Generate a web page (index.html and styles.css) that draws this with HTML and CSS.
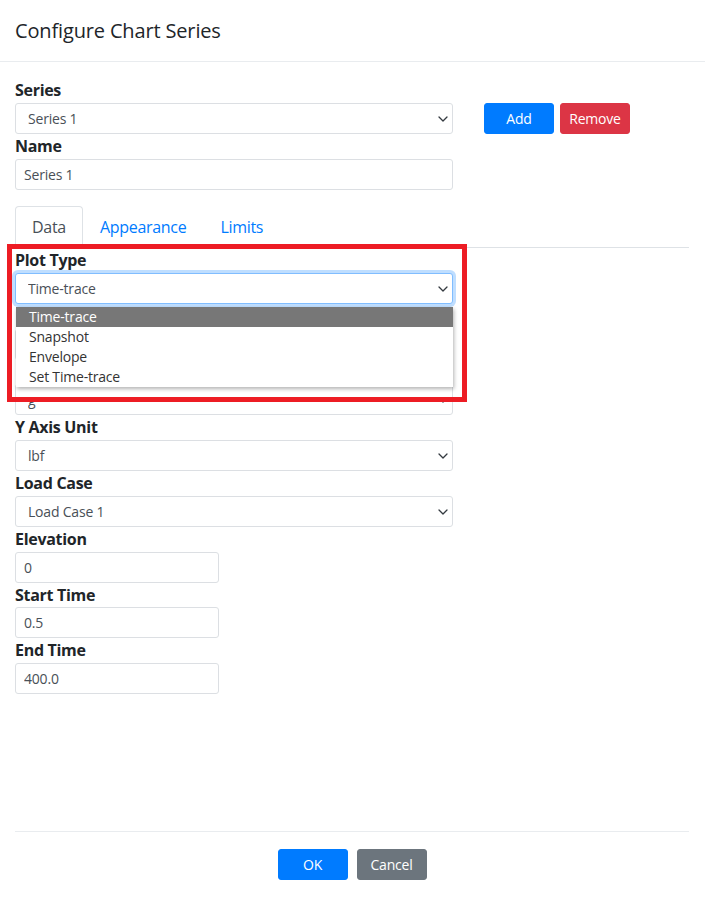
FILE: index.html
```html
<!DOCTYPE html>
<html lang="en">
<head>
<meta charset="utf-8">
<title>Configure Chart Series</title>
<link rel="stylesheet" href="styles.css">
</head>
<body>
<div class="modal">
  <div class="modal-header">
    <h5 class="modal-title">Configure Chart Series</h5>
  </div>
  <div class="modal-body">
    <div class="series-row">
      <div class="series-fields">
        <label class="field-label">Series</label>
        <div class="select-wrap">
          <select class="form-select"><option>Series 1</option></select>
          <svg class="chev" viewBox="0 0 10 6" width="10" height="6"><path d="M1 1l4 4 4-4" fill="none" stroke="#343a40" stroke-width="1.3" stroke-linecap="round" stroke-linejoin="round"/></svg>
        </div>
        <label class="field-label">Name</label>
        <input class="form-input wide" type="text" value="Series 1">
      </div>
      <div class="series-actions">
        <button class="btn btn-primary">Add</button>
        <button class="btn btn-danger">Remove</button>
      </div>
    </div>

    <ul class="nav-tabs">
      <li class="tab active">Data</li>
      <li class="tab">Appearance</li>
      <li class="tab">Limits</li>
    </ul>

    <div class="tab-pane">
      <label class="field-label">Plot Type</label>
      <div class="select-wrap">
        <select class="form-select focused"><option>Time-trace</option></select>
        <svg class="chev" viewBox="0 0 10 6" width="10" height="6"><path d="M1 1l4 4 4-4" fill="none" stroke="#343a40" stroke-width="1.3" stroke-linecap="round" stroke-linejoin="round"/></svg>
      </div>
      <div class="field-label"><span class="covered">Component</span></div>
      <div class="select-wrap">
        <select class="form-select"><option></option></select>
      </div>
      <div class="field-label"><span class="covered">Quantity</span></div>
      <div class="select-wrap">
        <select class="form-select"><option>g</option></select>
        <svg class="chev" viewBox="0 0 10 6" width="10" height="6"><path d="M1 1l4 4 4-4" fill="none" stroke="#343a40" stroke-width="1.3" stroke-linecap="round" stroke-linejoin="round"/></svg>
      </div>
      <label class="field-label">Y Axis Unit</label>
      <div class="select-wrap">
        <select class="form-select"><option>lbf</option></select>
        <svg class="chev" viewBox="0 0 10 6" width="10" height="6"><path d="M1 1l4 4 4-4" fill="none" stroke="#343a40" stroke-width="1.3" stroke-linecap="round" stroke-linejoin="round"/></svg>
      </div>
      <label class="field-label">Load Case</label>
      <div class="select-wrap">
        <select class="form-select"><option>Load Case 1</option></select>
        <svg class="chev" viewBox="0 0 10 6" width="10" height="6"><path d="M1 1l4 4 4-4" fill="none" stroke="#343a40" stroke-width="1.3" stroke-linecap="round" stroke-linejoin="round"/></svg>
      </div>
      <label class="field-label">Elevation</label>
      <input class="form-input short" type="text" value="0">
      <label class="field-label">Start Time</label>
      <input class="form-input short" type="text" value="0.5">
      <label class="field-label">End Time</label>
      <input class="form-input short" type="text" value="400.0">
    </div>
  </div>
  <div class="modal-footer">
    <button class="btn btn-primary">OK</button>
    <button class="btn btn-secondary">Cancel</button>
  </div>

  <ul class="dropdown-list">
    <li class="dd-item selected">Time-trace</li>
    <li class="dd-item">Snapshot</li>
    <li class="dd-item">Envelope</li>
    <li class="dd-item">Set Time-trace</li>
  </ul>
  <div class="annotation"></div>
</div>
</body>
</html>
```

FILE: styles.css
```css
* { box-sizing: border-box; }

html, body {
  margin: 0;
  padding: 0;
  background: #fff;
}

body {
  font-family: "Open Sans", "Noto Sans", sans-serif;
  color: #212529;
}

.modal {
  position: relative;
  display: flex;
  flex-direction: column;
  height: 900px;
  width: 705px;
}

.modal-header {
  padding: 16px 15px 15px;
  border-bottom: 1px solid #e9ecef;
}

.modal-title {
  margin: 0;
  font-size: 20px;
  line-height: 30px;
  font-weight: 500;
  letter-spacing: -0.15px;
  color: #212529;
}

.modal-body {
  flex: 1;
  padding: 16px 16px 0 15px;
}

.series-row {
  display: flex;
}

.series-fields {
  width: 438px;
  display: flex;
  flex-direction: column;
}

.series-actions {
  display: flex;
  gap: 6px;
  margin-left: 31px;
  padding-top: 24.75px;
  align-items: flex-start;
}

.field-label {
  display: block;
  height: 24.75px;
  font-size: 16px;
  line-height: 24.75px;
  font-weight: 700;
  letter-spacing: -0.3px;
  color: #212529;
}

.covered {
  visibility: hidden;
}

.select-wrap {
  position: relative;
  width: 438px;
}

.form-select {
  display: block;
  width: 100%;
  height: 31px;
  margin: 0;
  padding: 0 24px 0 12px;
  font-family: inherit;
  font-size: 14px;
  letter-spacing: -0.2px;
  color: #495057;
  background: #fff;
  border: 1px solid #dcdfe3;
  border-radius: 3px;
  appearance: none;
  -webkit-appearance: none;
  outline: none;
}

.form-select.focused {
  border-color: #80bdff;
  box-shadow: 0 0 0 3px rgba(0, 123, 255, 0.25);
}

.chev {
  position: absolute;
  right: 5px;
  top: 13px;
}

.form-input {
  display: block;
  height: 31px;
  margin: 0;
  padding: 0 8px;
  font-family: inherit;
  font-size: 14px;
  letter-spacing: -0.2px;
  color: #495057;
  background: #fff;
  border: 1px solid #dcdfe3;
  border-radius: 3px;
  outline: none;
}

.form-input.wide { width: 438px; }
.form-input.short { width: 204px; }

.btn {
  width: 70px;
  height: 31px;
  padding: 0;
  font-family: inherit;
  font-size: 14px;
  letter-spacing: -0.2px;
  line-height: 29px;
  color: #fff;
  border: 1px solid transparent;
  border-radius: 3px;
}

.btn-primary { background: #007bff; border-color: #007bff; }
.btn-danger { background: #dc3545; border-color: #dc3545; }
.btn-secondary { background: #6c757d; border-color: #6c757d; }

.nav-tabs {
  list-style: none;
  margin: 16px 0 0;
  padding: 0;
  display: flex;
  border-bottom: 1px solid #dee2e6;
}

.tab {
  padding: 8px 16px;
  margin-bottom: -1px;
  font-size: 16px;
  line-height: 24px;
  letter-spacing: -0.3px;
  color: #007bff;
  border: 1px solid transparent;
  border-top-left-radius: 4px;
  border-top-right-radius: 4px;
}

.tab.active {
  color: #495057;
  background: #fff;
  border-color: #dee2e6 #dee2e6 #fff;
}

.tab-pane {
  display: flex;
  flex-direction: column;
  padding-top: 0.5px;
}

.modal-footer {
  height: 69px;
  margin: 0 16px 0 15px;
  padding-top: 17px;
  border-top: 1px solid #e9ecef;
  display: flex;
  justify-content: center;
  align-items: flex-start;
  gap: 9px;
}

.dropdown-list {
  position: absolute;
  left: 16px;
  top: 307px;
  width: 437px;
  margin: 0;
  padding: 0;
  list-style: none;
  background: #fff;
  box-shadow: 1px 2px 4px rgba(0, 0, 0, 0.3);
}

.dd-item {
  height: 20px;
  line-height: 20px;
  padding-left: 13px;
  font-size: 14px;
  letter-spacing: -0.2px;
  color: #333;
}

.dd-item.selected {
  background: #777;
  color: #fff;
}

.annotation {
  position: absolute;
  left: 7px;
  top: 244px;
  width: 460px;
  height: 158px;
  border: 5px solid #ed1c24;
  pointer-events: none;
}
```
